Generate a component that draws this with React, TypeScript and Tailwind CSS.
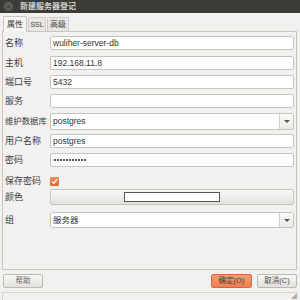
import React from "react";

const font = { fontFamily: '"Liberation Sans", "Noto Sans CJK SC", sans-serif' };

function Input({ value, children }: { value?: string; children?: React.ReactNode }) {
  return (
    <div className="flex-1 h-[14px] bg-white border border-[#c6c3bd] rounded-[2px] flex items-center pl-[2px] text-[8.5px] text-[#333] leading-none whitespace-nowrap">
      {children ?? value}
    </div>
  );
}

function Combo({ value, h }: { value: string; h: string }) {
  return (
    <div className={`flex-1 ${h} bg-white border border-[#c6c3bd] rounded-[2px] flex items-center text-[8.5px] text-[#333] leading-none`}>
      <div className="flex-1 pl-[2px]">{value}</div>
      <div className="w-[14px] h-full border-l border-[#d6d3ce] bg-gradient-to-b from-[#fbfbfa] to-[#ebe9e6] flex items-center justify-center">
        <div className="w-0 h-0 border-l-[3px] border-r-[3px] border-t-[3px] border-l-transparent border-r-transparent border-t-[#555]" />
      </div>
    </div>
  );
}

function Row({ label, mt, h, small, children }: { label: string; mt: string; h: string; small?: boolean; children: React.ReactNode }) {
  return (
    <div className={`flex items-center ${mt} ${h}`}>
      <div
        className={`w-[47px] shrink-0 ${small ? "text-[8.4px]" : "text-[9px]"} text-[#3c3c3c] leading-none pl-[2px] whitespace-nowrap`}
      >
        {label}
      </div>
      {children}
    </div>
  );
}

export default function App() {
  return (
    <div className="w-[300px] h-[300px] bg-[#f2f1f0] flex flex-col overflow-hidden" style={font}>
      {/* Title bar */}
      <div className="h-[13px] bg-[#3c3b37] flex items-center pl-[4px]">
        <div className="w-[9px] h-[9px] rounded-full bg-[#5f5e59] flex items-center justify-center text-[7px] text-[#3c3b37] leading-none font-bold">
          ×
        </div>
        <div className="ml-[7px] text-[8px] text-[#d8d5cd] leading-none font-bold">新建服务器登记</div>
      </div>
      {/* Tabs */}
      <div className="h-[18px] flex items-end pl-[3px]">
        <div className="w-[24px] h-[16px] bg-[#f6f5f4] border border-b-0 border-[#c9c6c0] rounded-t-[2px] text-[8px] text-[#333] flex items-center justify-center leading-none relative top-[1px]">
          属性
        </div>
        <div className="w-[18px] h-[14px] ml-[1px] bg-[#e9e7e4] border border-b-0 border-[#cfccc6] rounded-t-[2px] text-[7px] text-[#444] flex items-center justify-center leading-none">
          SSL
        </div>
        <div className="w-[22px] h-[14px] ml-[1px] bg-[#e9e7e4] border border-b-0 border-[#cfccc6] rounded-t-[2px] text-[8px] text-[#444] flex items-center justify-center leading-none">
          高级
        </div>
      </div>
      {/* Panel */}
      <div className="mx-[2px] w-[295px] h-[239px] border border-[#c9c6c0] bg-[#f2f1f0] flex flex-col pr-[2px]">
        <Row label="名称" mt="mt-[4px]" h="h-[14px]">
          <Input value="wuliher-server-db" />
        </Row>
        <Row label="主机" mt="mt-[6px]" h="h-[14px]">
          <Input value="192.168.11.8" />
        </Row>
        <Row label="端口号" mt="mt-[5px]" h="h-[14px]">
          <Input value="5432" />
        </Row>
        <Row label="服务" mt="mt-[5px]" h="h-[14px]">
          <Input value="" />
        </Row>
        <Row label="维护数据库" mt="mt-[5px]" h="h-[17px]" small>
          <Combo value="postgres" h="h-[17px]" />
        </Row>
        <Row label="用户名称" mt="mt-[4px]" h="h-[14px]">
          <Input value="postgres" />
        </Row>
        <Row label="密码" mt="mt-[5px]" h="h-[14px]">
          <Input>
            <div className="flex gap-[1px] pl-[1px]">
              {Array.from({ length: 11 }).map((_, i) => (
                <div key={i} className="w-[2px] h-[2px] rounded-full bg-[#222]" />
              ))}
            </div>
          </Input>
        </Row>
        <Row label="保存密码" mt="mt-[6px]" h="h-[16px]">
          <div className="w-[9px] h-[9px] bg-gradient-to-b from-[#f08a5d] to-[#dd6b3c] rounded-[1px] flex items-center justify-center">
            <svg width="7" height="7" viewBox="0 0 7 7">
              <path d="M1 3.6 L2.8 5.3 L6 1.3" stroke="#fff" strokeWidth="1.3" fill="none" />
            </svg>
          </div>
        </Row>
        <Row label="颜色" mt="mt-0" h="h-[16px]">
          <div className="flex-1 h-[16px] border border-[#c6c3bd] rounded-[2px] bg-gradient-to-b from-[#f8f8f7] to-[#e4e2df] flex items-center pl-[73px]">
            <div className="w-[96px] h-[10px] bg-white border border-[#555]" />
          </div>
        </Row>
        <Row label="组" mt="mt-[7px]" h="h-[16px]">
          <Combo value="服务器" h="h-[16px]" />
        </Row>
      </div>
      {/* Buttons */}
      <div className="h-[22px] flex items-center px-[3px]">
        <button className="w-[40px] h-[14px] border border-[#bcb9b3] rounded-[2px] bg-gradient-to-b from-[#f8f8f7] to-[#e2e0dc] text-[7.5px] text-[#666] leading-none">
          帮助
        </button>
        <div className="flex-1" />
        <button className="w-[41px] h-[14px] border border-[#d9693b] rounded-[2px] bg-gradient-to-b from-[#f59c75] to-[#ee7d4f] text-[7.5px] text-[#4a3a33] leading-none">
          确定(O)
        </button>
        <button className="ml-[5px] w-[40px] h-[14px] border border-[#bcb9b3] rounded-[2px] bg-gradient-to-b from-[#f8f8f7] to-[#e2e0dc] text-[7.5px] text-[#444] leading-none">
          取消(C)
        </button>
      </div>
      {/* Status area */}
      <div className="flex-1 mx-[2px] border-t border-l border-[#d6d3ce] relative">
        <div className="absolute right-[1px] bottom-[1px] text-[6px] text-[#aaa] leading-none">◢</div>
      </div>
    </div>
  );
}
